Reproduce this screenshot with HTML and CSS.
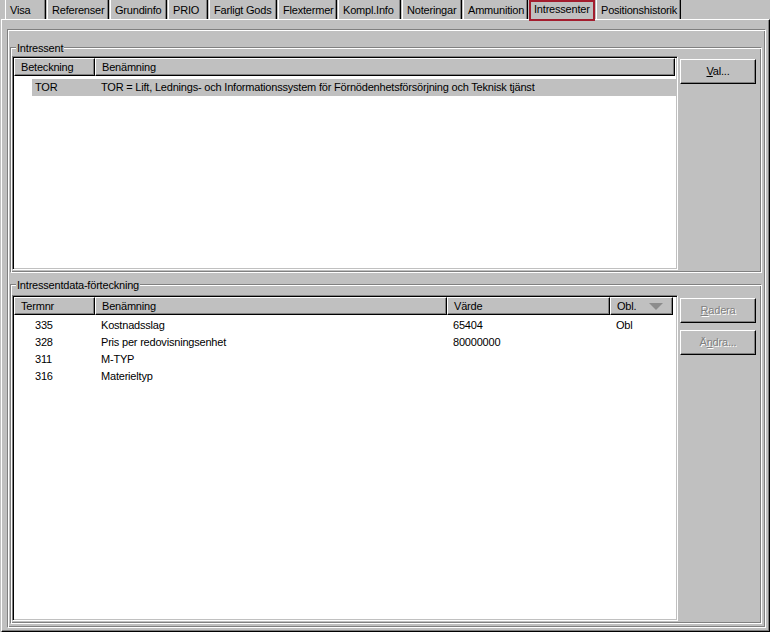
FILE: index.html
```html
<!DOCTYPE html>
<html lang="sv">
<head>
<meta charset="utf-8">
<title>Intressenter</title>
<link rel="stylesheet" href="styles.css">
</head>
<body>
<div class="tabs">
  <div class="tab t-visa">Visa</div>
  <div class="tab t-ref">Referenser</div>
  <div class="tab t-grund">Grundinfo</div>
  <div class="tab t-prio">PRIO</div>
  <div class="tab t-farligt">Farligt Gods</div>
  <div class="tab t-flex">Flextermer</div>
  <div class="tab t-kompl">Kompl.Info</div>
  <div class="tab t-not">Noteringar</div>
  <div class="tab t-amm">Ammunition</div>
  <div class="tab t-intr active">Intressenter</div>
  <div class="tab t-pos">Positionshistorik</div>
</div>
<div class="panel">
  <div class="frame">
    <div class="group g1">
      <span class="group-label">Intressent</span>
      <div class="group-body">
        <div class="list l1">
          <div class="lhead">
            <div class="hc w-term">Beteckning</div>
            <div class="hc w-ben1">Benämning</div>
          </div>
          <div class="lrows">
            <div class="row sel-row">
              <div class="sel">
                <span class="rc w-bet">TOR</span>
                <span class="rc">TOR = Lift, Lednings- och Informationssystem för Förnödenhetsförsörjning och Teknisk tjänst</span>
              </div>
            </div>
          </div>
        </div>
        <div class="btncol c1">
          <button class="btn"><u>V</u>al...</button>
        </div>
      </div>
    </div>
    <div class="group g2">
      <span class="group-label">Intressentdata-förteckning</span>
      <div class="group-body">
        <div class="list l2">
          <div class="lhead">
            <div class="hc w-term">Termnr</div>
            <div class="hc w-ben2">Benämning</div>
            <div class="hc w-val">Värde</div>
            <div class="hc w-obl hc-sort">Obl.
              <svg class="sort" width="14" height="7" viewBox="0 0 14 7"><path d="M0 0H14L7 7Z" fill="#8c8c8c"/></svg>
            </div>
          </div>
          <div class="lrows">
            <div class="row"><span class="rc w-term num">335</span><span class="rc w-ben2">Kostnadsslag</span><span class="rc w-val">65404</span><span class="rc w-obl">Obl</span></div>
            <div class="row"><span class="rc w-term num">328</span><span class="rc w-ben2">Pris per redovisningsenhet</span><span class="rc w-val">80000000</span><span class="rc w-obl"></span></div>
            <div class="row"><span class="rc w-term num">311</span><span class="rc w-ben2">M-TYP</span><span class="rc w-val"></span><span class="rc w-obl"></span></div>
            <div class="row"><span class="rc w-term num">316</span><span class="rc w-ben2">Materieltyp</span><span class="rc w-val"></span><span class="rc w-obl"></span></div>
          </div>
        </div>
        <div class="btncol c2">
          <button class="btn disabled"><u>R</u>adera</button>
          <button class="btn disabled">Ä<u>n</u>dra...</button>
        </div>
      </div>
    </div>
  </div>
</div>
</body>
</html>
```
FILE: styles.css
```css
html, body {
  margin: 0;
  padding: 0;
}
body {
  width: 770px;
  height: 632px;
  overflow: hidden;
  background: #c0c0c0;
  font-family: "Liberation Sans", Arial, sans-serif;
  font-size: 11px;
  letter-spacing: -0.2px;
  color: #000;
}

/* ---- tab strip ---- */
.tabs {
  display: flex;
  height: 19px;
  padding-left: 5px;
  position: relative;
  z-index: 2;
}
.tab {
  box-sizing: border-box;
  flex: none;
  height: 19px;
  margin-right: 1px;
  border-left: 1px solid #fff;
  border-right: 1px solid #000;
  box-shadow: inset -1px 0 #808080;
  padding: 4px 0 0 4px;
  line-height: 13px;
  white-space: nowrap;
  overflow: hidden;
}
.tab.active {
  height: 21px;
  border: 2px solid #a31d2e;
  box-shadow: none;
  padding: 1px 0 0 3px;
  background: #c0c0c0;
}
.t-visa { width: 41px; }
.t-ref { width: 62px; }
.t-grund { width: 57px; }
.t-prio { width: 40px; }
.t-farligt { width: 68px; }
.t-flex { width: 59px; }
.t-kompl { width: 63px; }
.t-not { width: 60px; }
.t-amm { width: 65px; }
.t-intr { width: 66px; }
.t-pos { width: 85px; }

/* ---- tab page ---- */
.panel {
  box-sizing: border-box;
  margin-left: 1px;
  width: 769px;
  height: 613px;
  border: 1px solid;
  border-color: #fff #000 #000 #fff;
  box-shadow: inset -1px -1px #808080;
  padding: 9px 3px 3px 5px;
}
.frame {
  box-sizing: border-box;
  height: 599px;
  border: 1px solid;
  border-color: #808080 #fff #fff #808080;
  box-shadow: inset 1px 1px #fff, inset -1px -1px #808080;
  padding: 1px 3px 0 2px;
  display: flex;
  flex-direction: column;
}

/* ---- group boxes ---- */
.group {
  position: relative;
  box-sizing: border-box;
  flex: none;
  border: 1px solid;
  border-color: #808080 #fff #fff #808080;
  box-shadow: inset 1px 1px #fff, inset -1px -1px #808080;
  padding: 8px 1px 0 1px;
}
.g1 {
  margin-top: 16px;
  height: 226px;
}
.g2 {
  margin-top: 11px;
  height: 340px;
  padding-top: 10px;
}
.group-label {
  position: absolute;
  top: -6px;
  left: 5px;
  padding: 0 1px;
  background: #c0c0c0;
  line-height: 13px;
  white-space: nowrap;
}
.group-body {
  display: flex;
}

/* ---- list views ---- */
.list {
  box-sizing: border-box;
  flex: none;
  width: 666px;
  background: #fff;
  border: 1px solid;
  border-color: #808080 #fff #fff #808080;
  box-shadow: inset 1px 1px #000, inset -1px -1px #c0c0c0;
  padding: 1px;
  overflow: hidden;
}
.l1 { height: 214px; }
.l2 { height: 326px; }

.lhead {
  display: flex;
  height: 18px;
}
.hc {
  box-sizing: border-box;
  flex: none;
  height: 18px;
  border: 1px solid;
  border-color: #fff #000 #000 #fff;
  box-shadow: inset -1px -1px #808080;
  background: #c0c0c0;
  padding-left: 6px;
  line-height: 16px;
  white-space: nowrap;
  overflow: hidden;
}
.hc-sort {
  display: flex;
  align-items: center;
}
.sort {
  margin-left: auto;
  margin-right: 9px;
  margin-top: 1px;
}

.w-term { width: 81px; }
.w-ben1 { width: 580px; }
.w-ben2 { width: 352px; }
.w-val { width: 163px; }
.w-obl { width: 63px; }
.w-bet { width: 63px; }

.lrows {
  padding-top: 3px;
}
.l2 .lrows {
  padding-top: 2px;
}
.row {
  display: flex;
  height: 17px;
  line-height: 17px;
  white-space: nowrap;
}
.rc {
  box-sizing: border-box;
  flex: none;
  padding-left: 6px;
  overflow: hidden;
}
.rc.num {
  padding-left: 21px;
}
.sel-row {
  padding-left: 18px;
}
.sel {
  display: flex;
  flex: 1;
  background: #c0c0c0;
}
.sel .w-bet {
  padding-left: 3px;
}

/* ---- buttons ---- */
.btncol {
  flex: none;
  margin-left: 2px;
  width: 76px;
  display: flex;
  flex-direction: column;
}
.c1 { padding-top: 3px; }
.c2 { padding-top: 3px; }
.btn {
  box-sizing: border-box;
  display: block;
  width: 76px;
  height: 25px;
  margin: 0;
  padding: 0;
  background: #c0c0c0;
  border: 1px solid;
  border-color: #fff #000 #000 #fff;
  box-shadow: inset -1px -1px #808080;
  font-family: inherit;
  font-size: 11px;
  letter-spacing: -0.2px;
  color: #000;
  text-align: center;
  line-height: 21px;
}
.btn + .btn {
  margin-top: 7px;
}
.btn.disabled {
  color: #808080;
  text-shadow: 1px 1px #fff;
}
```
